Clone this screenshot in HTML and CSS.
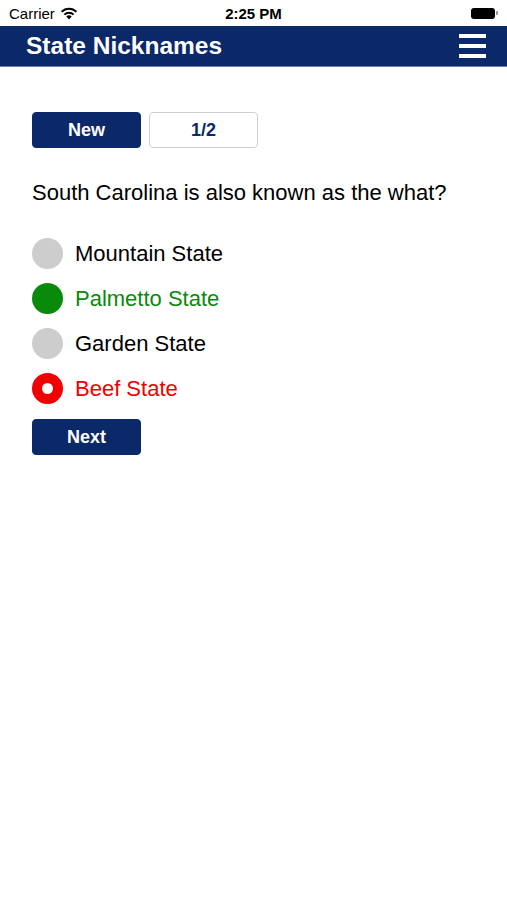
FILE: index.html
```html
<!DOCTYPE html>
<html>
	<head>
		<meta charset="UTF-8">
		<title>State Nicknames</title>
		<link rel="stylesheet" href="styles.css">
	</head>
	<body>
		<div class="status">
			<div class="carrier">Carrier
				<svg class="wifi" width="18" height="13" viewBox="0 0 18 13">
					<path d="M9 12.5 L6.3 9.6 A3.8 3.8 0 0 1 11.7 9.6 Z" fill="#000"/>
					<path d="M4.4 7.6 A6.5 6.5 0 0 1 13.6 7.6" fill="none" stroke="#000" stroke-width="2"/>
					<path d="M1.6 4.8 A10.5 10.5 0 0 1 16.4 4.8" fill="none" stroke="#000" stroke-width="2"/>
				</svg>
			</div>
			<div class="time">2:25 PM</div>
			<div class="battery"><span class="level"></span><span class="cap"></span></div>
		</div>
		<div class="navbar">
			<div class="title">State Nicknames</div>
			<div class="menu"><span></span><span></span><span></span></div>
		</div>
		<div class="content">
			<div class="btnrow">
				<div class="btn">New</div>
				<div class="btn light">1/2</div>
			</div>
			<p class="question">South Carolina is also known as the what?</p>
			<ul class="answers">
				<li><span class="dot"></span>Mountain State</li>
				<li class="right"><span class="dot"></span>Palmetto State</li>
				<li><span class="dot"></span>Garden State</li>
				<li class="wrong"><span class="dot"></span>Beef State</li>
			</ul>
			<div class="btn">Next</div>
		</div>
	</body>
</html>
```

FILE: styles.css
```css
*{
	margin: 0;
	padding: 0;
}
ul{
	list-style: none;
}
body{
	font-family: "Liberation Sans", Arial, sans-serif;
	background: #fff;
	color: #000;
}
.status{
	height: 26px;
	display: flex;
	align-items: center;
	justify-content: space-between;
	padding: 0 9px;
	font-size: 15px;
}
.carrier{
	width: 120px;
	display: flex;
	align-items: center;
	gap: 5px;
}
.time{
	font-weight: bold;
	font-size: 15px;
}
.battery{
	width: 120px;
	display: flex;
	justify-content: flex-end;
	align-items: center;
}
.battery .level{
	width: 24px;
	height: 11px;
	background: #000;
	border-radius: 3px;
}
.battery .cap{
	width: 2px;
	height: 4px;
	background: #999;
	margin-left: 1px;
	border-radius: 0 1px 1px 0;
}
.navbar{
	height: 40px;
	background: #0b2868;
	display: flex;
	align-items: center;
	justify-content: space-between;
	padding: 0 21px 0 26px;
	border-bottom: 1px solid #6d7fa6;
}
.title{
	color: #fff;
	font-weight: bold;
	font-size: 24.5px;
}
.menu{
	display: flex;
	flex-direction: column;
	gap: 6px;
}
.menu span{
	display: block;
	width: 27px;
	height: 4px;
	background: #fff;
}
.content{
	padding: 45px 32px;
}
.btnrow{
	display: flex;
	gap: 8px;
}
.btn{
	width: 109px;
	height: 36px;
	box-sizing: border-box;
	background: #0b2868;
	color: #fff;
	font-weight: bold;
	font-size: 18px;
	display: flex;
	align-items: center;
	justify-content: center;
	border-radius: 4px;
	border: 1px solid #0b2868;
}
.btn.light{
	background: #fff;
	color: #0b2868;
	border: 1px solid #cfcfcf;
}
.question{
	font-size: 22px;
	margin: 32px 0 25px;
}
.answers li{
	display: flex;
	align-items: center;
	height: 45px;
	font-size: 22px;
}
.answers .dot{
	width: 31px;
	height: 31px;
	border-radius: 50%;
	background: #cdcdcd;
	margin-right: 12px;
	box-sizing: border-box;
}
.answers .right{
	color: #0a8a0a;
}
.answers .right .dot{
	background: #0a8a0a;
}
.answers .wrong{
	color: #f20000;
}
.answers .wrong .dot{
	background: #fff;
	border: 10px solid #f20000;
}
.content > .btn{
	margin-top: 8px;
}
```
